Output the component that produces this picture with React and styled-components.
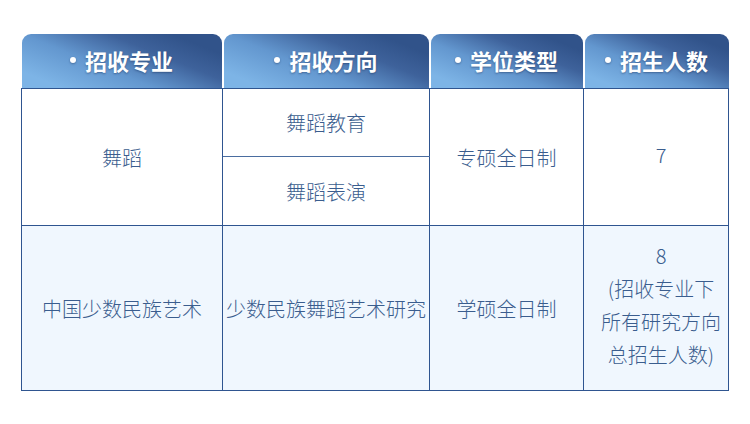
import React from "react";
import styled, { createGlobalStyle } from "styled-components";

const Global = createGlobalStyle`
  html, body { margin: 0; padding: 0; background: #ffffff; }
  body { font-family: "Noto Sans CJK SC", "Noto Sans", sans-serif; }
`;

const Page = styled.div`
  padding: 34px 0 0 21px;
`;

const Table = styled.table`
  border-collapse: collapse;
  table-layout: fixed;
  width: 707px;
`;

const HeadCell = styled.th`
  padding: 0 1px;
  height: 54px;
  border-bottom: 1px solid #2f5590;
  vertical-align: bottom;
  &:first-child { padding-left: 0; }
  &:last-child { padding-right: 0; }
`;

const Tab = styled.div`
  height: 54px;
  border-radius: 9px 9px 0 0;
  background: linear-gradient(22deg, #7db4e6 12%, #6397cf 40%, #3e629b 66%, #31538a 85%);
  color: #ffffff;
  font-size: 22px;
  font-weight: 700;
  display: flex;
  align-items: center;
  justify-content: center;
  gap: 9px;
  padding-bottom: 2px;
  box-sizing: border-box;
  text-shadow: 0 1px 2px rgba(20, 40, 80, 0.45);
`;

const Dot = styled.span`
  width: 6px;
  height: 6px;
  border-radius: 50%;
  background: #ffffff;
  box-shadow: 0 1px 2px rgba(20, 40, 80, 0.4);
`;

const Row = styled.tr`
  background: ${(p) => (p.$alt ? "#f0f7fe" : "#ffffff")};
`;

const Cell = styled.td`
  border: 1px solid #2f5590;
  height: ${(p) => p.$h}px;
  padding: 0;
  text-align: center;
  vertical-align: middle;
  color: #3a5d8e;
  font-size: 20px;
  font-weight: 300;
  line-height: 33px;
  white-space: nowrap;
`;

const CountCell = styled(Cell)`
  padding: 0 0 6px 10px;
  box-sizing: border-box;
`;

const SubCell = styled(Cell)`
  border-bottom-color: #4a6da0;
`;

const headers = ["招收专业", "招收方向", "学位类型", "招生人数"];

export default function App() {
  return (
    <Page>
      <Global />
      <Table>
        <colgroup>
          <col style={{ width: 201 }} />
          <col style={{ width: 207 }} />
          <col style={{ width: 154 }} />
          <col style={{ width: 145 }} />
        </colgroup>
        <thead>
          <tr>
            {headers.map((h) => (
              <HeadCell key={h}>
                <Tab>
                  <Dot />
                  {h}
                </Tab>
              </HeadCell>
            ))}
          </tr>
        </thead>
        <tbody>
          <Row>
            <Cell rowSpan={2}>舞蹈</Cell>
            <SubCell $h={67}>舞蹈教育</SubCell>
            <Cell rowSpan={2}>专硕全日制</Cell>
            <CountCell rowSpan={2}>7</CountCell>
          </Row>
          <Row>
            <Cell $h={68}>舞蹈表演</Cell>
          </Row>
          <Row $alt>
            <Cell $h={164}>中国少数民族艺术</Cell>
            <Cell>少数民族舞蹈艺术研究</Cell>
            <Cell>学硕全日制</Cell>
            <CountCell>
              8
              <br />
              (招收专业下
              <br />
              所有研究方向
              <br />
              总招生人数)
            </CountCell>
          </Row>
        </tbody>
      </Table>
    </Page>
  );
}
